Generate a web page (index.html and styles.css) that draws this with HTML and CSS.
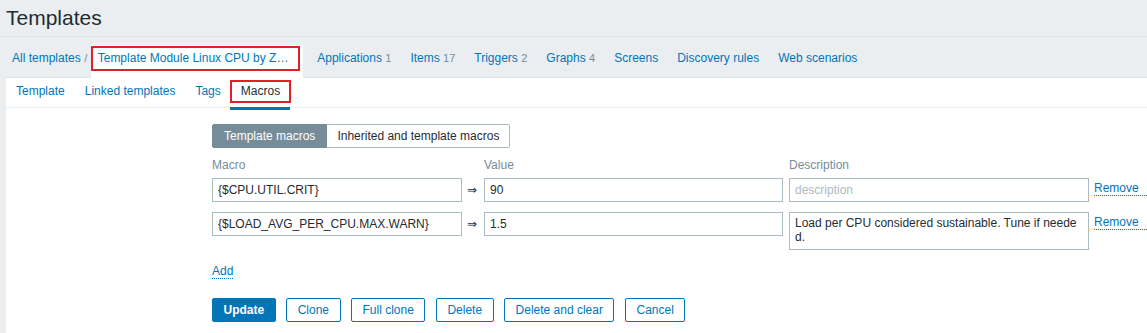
FILE: index.html
```html
<!DOCTYPE html>
<html lang="en">
<head>
    <meta charset="UTF-8">
    <title>Templates</title>
    <link rel="stylesheet" href="styles.css">
</head>
<body>
    <header class="page-header">
        <h1>Templates</h1>
    </header>

    <nav class="object-nav">
        <a href="#" class="nav-link first">All templates</a>
        <span class="crumb-sep">/</span>
        <span class="crumb-current"><a href="#" class="crumb-link">Template Module Linux CPU by Zabbix agent</a></span>
        <a href="#" class="nav-link">Applications <span class="count">1</span></a>
        <a href="#" class="nav-link">Items <span class="count">17</span></a>
        <a href="#" class="nav-link">Triggers <span class="count">2</span></a>
        <a href="#" class="nav-link">Graphs <span class="count">4</span></a>
        <a href="#" class="nav-link">Screens</a>
        <a href="#" class="nav-link">Discovery rules</a>
        <a href="#" class="nav-link">Web scenarios</a>
    </nav>

    <main class="content">
        <ul class="tabs">
            <li><a href="#">Template</a></li>
            <li><a href="#">Linked templates</a></li>
            <li><a href="#">Tags</a></li>
            <li class="active"><a href="#">Macros</a></li>
        </ul>

        <form class="macros-form">
            <div class="radio-list">
                <span class="radio selected">Template macros</span>
                <span class="radio">Inherited and template macros</span>
            </div>

            <div class="macro-table">
                <div class="th">Macro</div>
                <div></div>
                <div class="th">Value</div>
                <div class="th">Description</div>
                <div></div>

                <input class="field" type="text" value="{$CPU.UTIL.CRIT}">
                <span class="arrow">&rArr;</span>
                <input class="field" type="text" value="90">
                <input class="field" type="text" placeholder="description">
                <a href="#" class="link-action">Remove</a>

                <input class="field" type="text" value="{$LOAD_AVG_PER_CPU.MAX.WARN}">
                <span class="arrow">&rArr;</span>
                <input class="field" type="text" value="1.5">
                <textarea class="field area">Load per CPU considered sustainable. Tune if needed.</textarea>
                <a href="#" class="link-action">Remove</a>
            </div>

            <a href="#" class="link-action add">Add</a>

            <div class="form-buttons">
                <button type="button" class="btn primary">Update</button>
                <button type="button" class="btn">Clone</button>
                <button type="button" class="btn">Full clone</button>
                <button type="button" class="btn">Delete</button>
                <button type="button" class="btn">Delete and clear</button>
                <button type="button" class="btn">Cancel</button>
            </div>
        </form>
    </main>
</body>
</html>
```

FILE: styles.css
```css
body {
    margin: 0;
    background-color: #ebeef0;
    font-family: 'Liberation Sans', Arial, sans-serif;
    font-size: 12px;
    color: #1f2c33;
    overflow: hidden;
}
a {
    color: #0275b8;
    text-decoration: none;
}
.page-header {
    height: 36px;
    border-bottom: 1px solid #dfe4e7;
    padding: 0 6px;
    display: flex;
    align-items: center;
}
.page-header h1 {
    margin: 0;
    font-size: 21px;
    font-weight: normal;
    color: #1f2c33;
}
.object-nav {
    height: 38px;
    padding-top: 2px;
    display: flex;
    align-items: center;
    padding-left: 2px;
}
.nav-link {
    padding: 0 9.5px;
}
.nav-link.first {
    padding: 0 0 0 10px;
}
.count {
    color: #768d99;
    font-size: 11px;
}
.crumb-sep {
    color: #768d99;
    font-size: 11px;
    width: 10px;
    text-align: center;
}
.crumb-current {
    background: #fff;
    align-self: flex-end;
    height: 34px;
    padding-right: 3px;
    margin-right: 5px;
    margin-bottom: -2px;
    display: flex;
    align-items: flex-start;
}
.crumb-link {
    display: block;
    width: 196px;
    height: 21px;
    line-height: 21px;
    margin-top: 1px;
    padding: 0 4px 0 5px;
    border: 2px solid #e31f26;
    white-space: nowrap;
    overflow: hidden;
    text-overflow: ellipsis;
}
.content {
    background: #fff;
    margin-left: 6px;
    border-top: 1px solid #dfe4e7;
    height: 260px;
}
.tabs {
    list-style: none;
    margin: 0;
    padding: 0;
    display: flex;
    height: 29px;
    border-bottom: 1px solid #ebeef0;
}
.tabs li a {
    display: block;
    padding: 0 10px;
    line-height: 27px;
}
.tabs li.active {
    border-bottom: 3px solid #0275b8;
    margin-top: 2px;
    margin-left: -1px;
    height: 27px;
}
.tabs li.active a {
    color: #1f2c33;
    border: 2px solid #e31f26;
    padding: 0 9px;
    line-height: 19px;
    margin-right: -1px;
}
.macros-form {
    padding: 16px 0 0 206px;
}
.radio-list {
    display: flex;
}
.radio {
    height: 22px;
    line-height: 22px;
    border: 1px solid #acbbc2;
    padding: 0 10px;
    background: #fff;
}
.radio.selected {
    background: #768d99;
    border-color: #768d99;
    color: #fff;
    padding: 0 11px;
    border-radius: 2px 0 0 2px;
}
.radio:last-child {
    border-left: none;
    border-radius: 0 2px 2px 0;
}
.macro-table {
    display: grid;
    grid-template-columns: 250px 22px 299px 306px auto;
    row-gap: 10px;
    align-items: start;
    margin-top: 10px;
}
.macro-table .th {
    color: #768d99;
    line-height: 14px;
    margin-bottom: -4px;
}
.macro-table > :nth-child(5n+4) {
    margin-left: 6px;
}
.macro-table > :nth-child(5n) {
    margin-left: 5px;
}
.field {
    box-sizing: border-box;
    height: 24px;
    border: 1px solid #acbbc2;
    padding: 0 5px;
    font-family: inherit;
    font-size: 12px;
    color: #1f2c33;
    background: #fff;
    outline: none;
    margin: 0;
    width: 100%;
}
.macro-table > :nth-child(5n+4).field {
    width: 300px;
}
.field::placeholder {
    color: #acbbc2;
}
.area {
    height: 38px;
    resize: none;
    padding: 3px 5px;
    line-height: 14px;
    overflow: hidden;
    word-break: break-all;
}
.arrow {
    line-height: 24px;
    text-align: center;
    color: #1f2c33;
    padding-right: 2px;
}
.link-action {
    display: inline-block;
    border-bottom: 1px dotted #0275b8;
    line-height: 14px;
    margin-top: 3px;
}
.add {
    margin-top: 14px;
}
.form-buttons {
    display: flex;
    gap: 10.5px;
    margin-top: 19px;
}
.btn {
    height: 24px;
    padding: 0 10.5px;
    border: 1px solid #0275b8;
    border-radius: 2px;
    background: #fff;
    color: #0275b8;
    font-family: inherit;
    font-size: 12px;
}
.btn.primary {
    background: #0275b8;
    color: #fff;
    font-weight: bold;
}
```
